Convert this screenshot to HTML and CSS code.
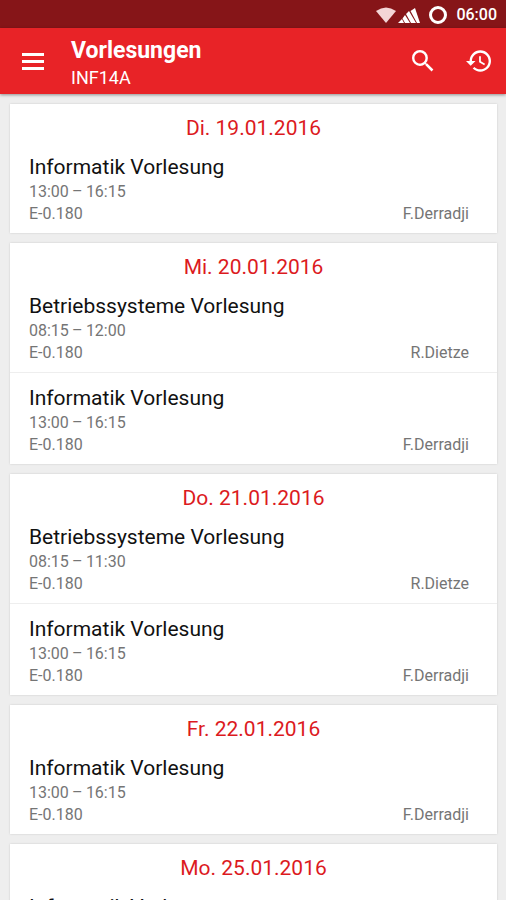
FILE: index.html
```html
<!DOCTYPE html>
<html lang="de">
<head>
<meta charset="utf-8">
<meta name="viewport" content="width=device-width, initial-scale=1">
<title>Vorlesungen</title>
<link rel="stylesheet" href="styles.css">
</head>
<body>
<div class="status">
  <svg class="wifi" viewBox="0 0 20 16" aria-hidden="true"><path d="M0 4Q10-3 20 4L10 16Z"/></svg>
  <svg class="signal" viewBox="0 0 23 17" aria-hidden="true"><path d="M0 16 4 12 6 16ZM4.500 11.500 7 8 12 16H7ZM8 7 11 4 18 16H13ZM12.500 4 17 1 22 16H19Z"/></svg>
  <svg class="ring" viewBox="0 0 20 20" aria-hidden="true"><circle cx="10" cy="10" r="7.5"/></svg>
  <span class="clock">06:00</span>
</div>
<header class="bar">
  <button class="icon" aria-label="Menü"><svg viewBox="0 0 24 22"><path d="M1 3H23V6H1ZM1 10H23V13H1ZM1 17H23V20H1Z"/></svg></button>
  <div class="heading">
    <h1>Vorlesungen</h1>
    <p>INF14A</p>
  </div>
  <button class="icon" aria-label="Suchen"><svg viewBox="3 3 18 18"><path d="M15.500 14h-.79l-.28-.27A6.470 6.470 0 0 0 16 9.500 6.500 6.500 0 1 0 9.500 16c1.610 0 3.090-.59 4.230-1.570l.27.28v.79l5 4.990L20.490 19l-4.990-5zm-6 0C7.010 14 5 11.990 5 9.500S7.010 5 9.500 5 14 7.010 14 9.500 11.990 14 9.500 14z"/></svg></button>
  <button class="icon history" aria-label="Verlauf"><svg viewBox="1 2 21 20"><path d="M13 3a9 9 0 0 0-9 9H1l3.890 3.890.07.14L9 12H6c0-3.870 3.130-7 7-7s7 3.130 7 7-3.130 7-7 7c-1.930 0-3.680-.79-4.940-2.060l-1.420 1.420A8.954 8.954 0 0 0 13 21a9 9 0 0 0 0-18zm-1 5v5l4.280 2.540.72-1.210-3.500-2.080V8H12z"/></svg></button>
</header>
<main class="list">
  <section class="card">
    <h2>Di. 19.01.2016</h2>
    <article class="item"><h3>Informatik Vorlesung</h3><p>13:00&thinsp;–&thinsp;16:15</p><p class="row"><span>E-0.180</span><span>F.Derradji</span></p></article>
  </section>
  <section class="card">
    <h2>Mi. 20.01.2016</h2>
    <article class="item"><h3>Betriebssysteme Vorlesung</h3><p>08:15&thinsp;–&thinsp;12:00</p><p class="row"><span>E-0.180</span><span>R.Dietze</span></p></article>
    <article class="item"><h3>Informatik Vorlesung</h3><p>13:00&thinsp;–&thinsp;16:15</p><p class="row"><span>E-0.180</span><span>F.Derradji</span></p></article>
  </section>
  <section class="card">
    <h2>Do. 21.01.2016</h2>
    <article class="item"><h3>Betriebssysteme Vorlesung</h3><p>08:15&thinsp;–&thinsp;11:30</p><p class="row"><span>E-0.180</span><span>R.Dietze</span></p></article>
    <article class="item"><h3>Informatik Vorlesung</h3><p>13:00&thinsp;–&thinsp;16:15</p><p class="row"><span>E-0.180</span><span>F.Derradji</span></p></article>
  </section>
  <section class="card">
    <h2>Fr. 22.01.2016</h2>
    <article class="item"><h3>Informatik Vorlesung</h3><p>13:00&thinsp;–&thinsp;16:15</p><p class="row"><span>E-0.180</span><span>F.Derradji</span></p></article>
  </section>
  <section class="card">
    <h2>Mo. 25.01.2016</h2>
    <article class="item"><h3>Informatik Vorlesung</h3></article>
  </section>
</main>
</body>
</html>
```
FILE: styles.css
```css
* { box-sizing: border-box; }
body {
  margin: 0;
  height: 100vh;
  display: flex;
  flex-direction: column;
  overflow: hidden;
  background: #eeeeee;
  color: #111;
  font-family: Roboto, "Liberation Sans", sans-serif;
}
h1, h2, h3, p { margin: 0; font-weight: 400; }
svg { display: block; fill: currentColor; }

.status {
  flex: none;
  display: flex;
  align-items: center;
  justify-content: flex-end;
  height: 28px;
  padding: 2px 9px 0 0;
  background: #861518;
  color: #fff;
}
.wifi { width: 20px; height: 16px; color: #f3d5d6; }
.signal { width: 23px; height: 17px; margin: 0 7px 0 2px; }
.ring { width: 20px; height: 20px; margin-right: 8px; fill: none; stroke: currentColor; stroke-width: 3; }
.clock { font-size: 16px; font-weight: 500; line-height: 24px; }

.bar {
  flex: none;
  position: relative;
  display: flex;
  align-items: center;
  height: 66px;
  padding: 0 15px 0 21px;
  background: #e82327;
  color: #fff;
  box-shadow: 0 1px 3px rgba(0, 0, 0, .4);
}
.icon { padding: 0; border: 0; background: none; color: inherit; }
.icon svg { width: 24px; height: 22px; }
.history { margin-left: 31px; }
.history svg { width: 25px; height: 24px; }
.heading { flex: 1; padding: 6px 0 0 26px; }
.heading h1 { font-size: 23px; font-weight: 700; line-height: 28px; }
.heading p { font-size: 18px; line-height: 26px; }

.list {
  flex: 1;
  min-height: 0;
  display: flex;
  flex-direction: column;
  gap: 10px;
  padding: 10px 9px 10px 10px;
  overflow-y: auto;
  scrollbar-width: none;
}
.card {
  flex: none;
  background: #fff;
  box-shadow: 0 0 2px rgba(0, 0, 0, .15);
}
.card h2 {
  padding-top: 11px;
  color: #dc1a1e;
  font-size: 21px;
  line-height: 26px;
  text-align: center;
}
.item {
  padding: 12px 28px 8px 19px;
  color: #757575;
  font-size: 16px;
  line-height: 22px;
}
.item + .item { border-top: 1px solid #eee; padding-top: 11px; }
.item h3 { color: #111; font-size: 21px; line-height: 28px; }
.row { display: flex; justify-content: space-between; }
```
